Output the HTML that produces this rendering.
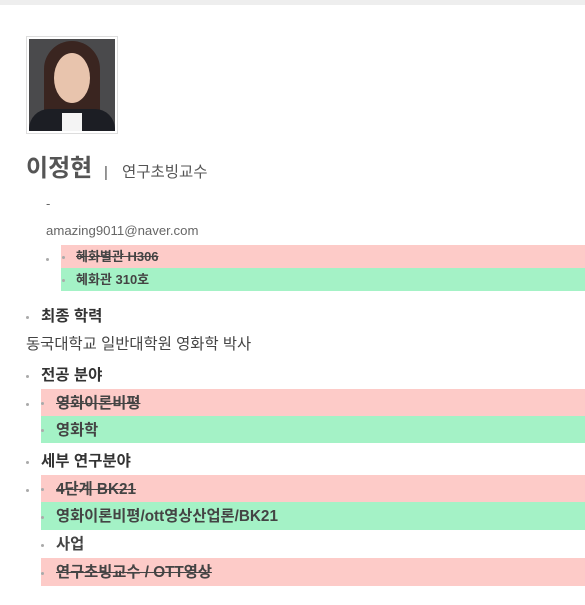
<!DOCTYPE html>
<html><head><meta charset="utf-8"><style>
*{margin:0;padding:0}
body{width:585px;height:605px;background:#fff;position:relative;overflow:hidden;font-family:"Liberation Sans","Noto Sans CJK KR",sans-serif;color:#444}
.a{position:absolute;white-space:nowrap}
.row{position:absolute;left:41px;right:0}
.red{background:#fdcbc8}
.grn{background:#a4f2c6}
.dot{position:absolute;width:3px;height:3px;border-radius:50%;background:#aaa}
.t{position:absolute;font-weight:bold;font-size:15.3px;color:#444;line-height:1}
.s{text-decoration:line-through}
.h{font-weight:bold;font-size:15.5px;color:#333;line-height:1}
</style></head><body>
<div class="a" style="left:0;top:0;width:585px;height:5px;background:#eee"></div>
<div class="a" style="left:26px;top:36px;width:90px;height:96px;border:1px solid #ddd;background:#fff"></div>
<div class="a" style="left:29px;top:39px;width:86px;height:92px;background:#4a4a4c;overflow:hidden">
<div class="a" style="left:15px;top:2px;width:56px;height:88px;border-radius:28px 28px 10px 10px;background:#3a2520"></div>
<div class="a" style="left:25px;top:14px;width:36px;height:50px;border-radius:50%;background:#e8c4ad"></div>
<div class="a" style="left:0;top:70px;width:86px;height:30px;border-radius:20px 20px 0 0;background:#1c1e24"></div>
<div class="a" style="left:33px;top:74px;width:20px;height:20px;background:#f4f4f4"></div>
</div>
<div class="a" style="left:26px;top:157px;font-size:24px;font-weight:bold;color:#555;line-height:1">이정현</div>
<div class="a" style="left:104px;top:165px;font-size:15px;color:#555;line-height:1">|</div>
<div class="a" style="left:122px;top:165px;font-size:15.5px;color:#555;line-height:1">연구초빙교수</div>
<div class="a" style="left:46px;top:197px;font-size:13px;color:#666;line-height:1">-</div>
<div class="a" style="left:46px;top:224px;font-size:13.2px;color:#666;line-height:1">amazing9011@naver.com</div>
<div class="dot" style="left:46px;top:258px"></div>
<div class="row red" style="left:61px;top:245px;height:23px"><div class="dot" style="left:1px;top:11px"></div><div class="t s" style="left:15px;top:5px;font-size:13px">혜화별관 H306</div></div>
<div class="row grn" style="left:61px;top:268px;height:23px"><div class="dot" style="left:1px;top:11px"></div><div class="t" style="left:15px;top:5px;font-size:13px">혜화관 310호</div></div>
<div class="dot" style="left:26px;top:316px"></div>
<div class="a h" style="left:41px;top:309px">최종 학력</div>
<div class="a" style="left:26px;top:337px;font-size:15.4px;color:#444;line-height:1">동국대학교 일반대학원 영화학 박사</div>
<div class="dot" style="left:26px;top:375px"></div>
<div class="a h" style="left:41px;top:368px">전공 분야</div>
<div class="dot" style="left:26px;top:403px"></div>
<div class="row red" style="top:389px;height:27px"><div class="dot" style="left:0;top:13px"></div><div class="t s" style="left:15px;top:7px">영화이론비평</div></div>
<div class="row grn" style="top:416px;height:27px"><div class="dot" style="left:0;top:13px"></div><div class="t" style="left:15px;top:7px">영화학</div></div>
<div class="dot" style="left:26px;top:461px"></div>
<div class="a h" style="left:41px;top:454px">세부 연구분야</div>
<div class="dot" style="left:26px;top:489px"></div>
<div class="row red" style="top:475px;height:27px"><div class="dot" style="left:0;top:13px"></div><div class="t s" style="left:15px;top:7px">4단계 BK21</div></div>
<div class="row grn" style="top:502px;height:28px"><div class="dot" style="left:0;top:14px"></div><div class="t" style="left:15px;top:7px">영화이론비평/ott영상산업론/BK21</div></div>
<div class="dot" style="left:41px;top:544px"></div>
<div class="a t" style="left:56px;top:537px">사업</div>
<div class="row red" style="top:558px;height:28px"><div class="dot" style="left:0;top:14px"></div><div class="t s" style="left:15px;top:7px">연구초빙교수 / OTT영상</div></div>
</body></html>
